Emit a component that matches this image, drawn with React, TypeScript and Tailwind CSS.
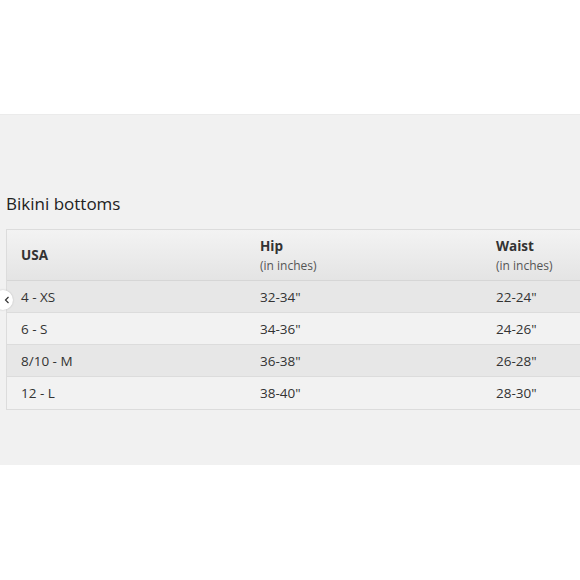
import React from "react";

const rows = [
  ["4 - XS", "32-34\"", "22-24\""],
  ["6 - S", "34-36\"", "24-26\""],
  ["8/10 - M", "36-38\"", "26-28\""],
  ["12 - L", "38-40\"", "28-30\""],
];

export default function App() {
  return (
    <div className="w-[580px] h-[580px] bg-white overflow-hidden" style={{ fontFamily: '"Open Sans", "Noto Sans", sans-serif' }}>
      <div className="h-[115px] bg-white border-b border-[#ebebeb]" />
      <div className="relative h-[350px] bg-[#f1f1f1] overflow-hidden">
        <div className="pl-[6px] pt-[77px]">
          <div className="text-[17px] leading-[24px] text-[#222]">Bikini bottoms</div>
          <div className="mt-[13px] w-[700px] border border-[#dcdcdc] text-[13.5px] text-[#333]">
            <div className="flex h-[51px] bg-gradient-to-b from-[#f3f3f3] to-[#e4e4e4] border-b border-[#d6d6d6]">
              <div className="w-[239px] pl-[14px] flex items-center font-bold">USA</div>
              <div className="w-[236px] pl-[14px] flex flex-col justify-center">
                <div className="font-bold leading-[20px] mt-[1px]">Hip</div>
                <div className="text-[12px] leading-[20px] text-[#555]">(in inches)</div>
              </div>
              <div className="flex-1 pl-[14px] flex flex-col justify-center">
                <div className="font-bold leading-[20px] mt-[1px]">Waist</div>
                <div className="text-[12px] leading-[20px] text-[#555]">(in inches)</div>
              </div>
            </div>
            {rows.map((r, i) => (
              <div
                key={i}
                className={`flex h-[32px] items-center ${i % 2 === 0 ? "bg-[#e7e7e7]" : "bg-[#f2f2f2]"} ${i < rows.length - 1 ? "border-b border-[#dcdcdc]" : ""}`}
              >
                <div className="w-[239px] pl-[14px] pt-[1px]">{r[0]}</div>
                <div className="w-[236px] pl-[14px] pt-[1px]">{r[1]}</div>
                <div className="flex-1 pl-[14px] pt-[1px]">{r[2]}</div>
              </div>
            ))}
          </div>
        </div>
        <div className="absolute left-[-7px] top-[175px] w-[20px] h-[20px] rounded-full bg-white shadow-[0_0_2px_rgba(0,0,0,0.2)] flex items-center justify-center">
          <svg width="6" height="8" viewBox="0 0 6 8" className="ml-[8px]">
            <path d="M4.5 1 L1.5 4 L4.5 7" fill="none" stroke="#333" strokeWidth="1.2" />
          </svg>
        </div>
      </div>
    </div>
  );
}
